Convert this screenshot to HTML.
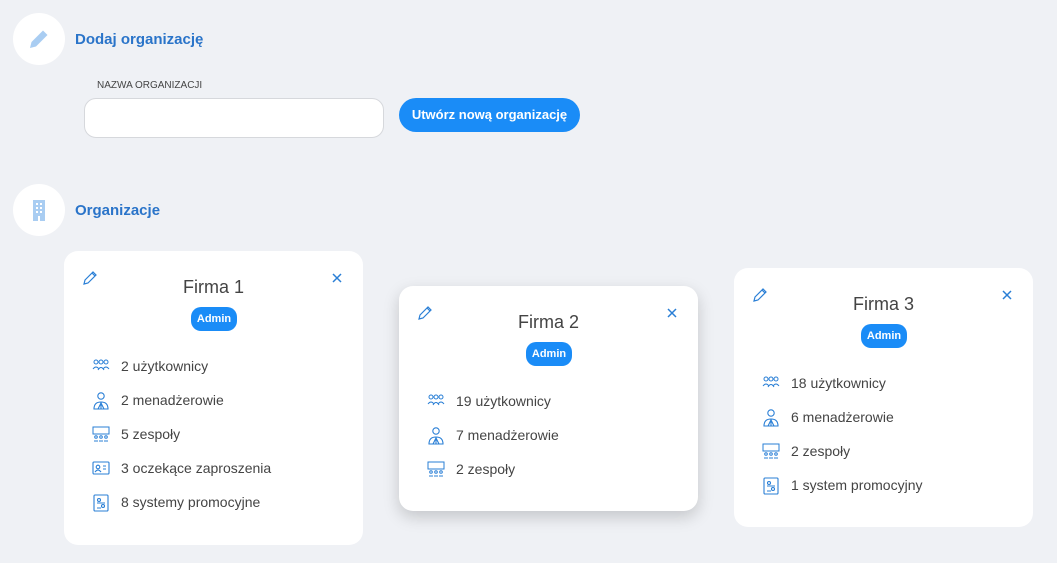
<!DOCTYPE html>
<html><head><meta charset="utf-8"><style>
body{margin:0;width:1057px;height:563px;background:#eff1f5;font-family:"Liberation Sans",sans-serif;position:relative;overflow:hidden}
.a{position:absolute}
.circ{width:52px;height:52px;border-radius:50%;background:#fff;left:13px}
.h{color:#2a74c9;font-size:15px;font-weight:bold;left:75px}
.card{background:#fff;border-radius:14px;width:299px}
.t{width:100%;text-align:center;top:26px;font-size:18px;color:#444}
.badge{left:127px;top:56px;width:46px;height:24px;border-radius:10px;background:#1a8cf7;color:#fff;font-size:11px;font-weight:bold;text-align:center;line-height:24px}
.it{left:28px;font-size:14px;color:#444;height:20px;line-height:20px}
.it svg{position:absolute;left:0;top:2px}
.it span{position:absolute;left:29px;white-space:nowrap}
</style></head><body>
<div class="a circ" style="top:13px"><svg class="a" style="left:14px;top:14px" width="24" height="24" viewBox="0 0 24 24"><path d="M3 21l1.5-6L16 3.5l4.5 4.5L9 19.5z" fill="#a9cdf2"/></svg></div>
<div class="a h" style="top:31px">Dodaj organizację</div>
<div class="a" style="left:97px;top:80px;font-size:10px;color:#444">NAZWA ORGANIZACJI</div>
<div class="a" style="left:84px;top:98px;width:298px;height:38px;background:#fff;border:1px solid #d6d8dc;border-radius:12px"></div>
<div class="a" style="left:399px;top:98px;width:181px;height:34px;background:#1a8cf7;border-radius:17px;color:#fff;font-weight:bold;font-size:13px;text-align:center;line-height:34px">Utwórz nową organizację</div>
<div class="a circ" style="top:184px"><svg class="a" style="left:18px;top:15px" width="16" height="22" viewBox="0 0 16 22"><rect x="2" y="1" width="12" height="21" fill="#a9cdf2"/><g fill="#fff"><rect x="5" y="4" width="2" height="2"/><rect x="9" y="4" width="2" height="2"/><rect x="5" y="8" width="2" height="2"/><rect x="9" y="8" width="2" height="2"/><rect x="5" y="12" width="2" height="2"/><rect x="9" y="12" width="2" height="2"/><rect x="7" y="17" width="2" height="5"/></g></svg></div>
<div class="a h" style="top:202px">Organizacje</div>

<div class="a card" style="left:64px;top:251px;height:294px">
<svg class="a" style="left:18px;top:19px" width="16" height="16" viewBox="0 0 16 16"><path d="M2 14l1-4 8-8 3 3-8 8zM10 3l3 3" fill="none" stroke="#2a7fd6" stroke-width="1.2"/></svg>
<svg class="a" style="left:268px;top:22px" width="10" height="10" viewBox="0 0 10 10"><path d="M1 1l8 8M9 1l-8 8" stroke="#2a7fd6" stroke-width="1.5"/></svg>
<div class="a t">Firma 1</div><div class="a badge">Admin</div>
<div class="a it" style="top:105px"><svg width="18" height="16"><g fill="none" stroke="#2a7fd6" stroke-width="1"><circle cx="4" cy="4" r="2"/><circle cx="9" cy="4" r="2"/><circle cx="14" cy="4" r="2"/><path d="M1 11q3-4 6 0M6 12q3-5 6 0M11 11q3-4 6 0"/></g></svg><span>2 użytkownicy</span></div>
<div class="a it" style="top:139px"><svg width="18" height="18"><g fill="none" stroke="#2a7fd6" stroke-width="1.1"><circle cx="9" cy="4" r="3.2"/><path d="M2 17q0-7 7-7 7 0 7 7zM9 10v7M6 17l3-6 3 6"/></g></svg><span>2 menadżerowie</span></div>
<div class="a it" style="top:173px"><svg width="18" height="16"><g fill="none" stroke="#2a7fd6" stroke-width="1"><rect x="1" y="1" width="16" height="7"/><circle cx="4" cy="11" r="1.3"/><circle cx="9" cy="11" r="1.3"/><circle cx="14" cy="11" r="1.3"/><path d="M2 15h4M7 15h4M12 15h4"/></g></svg><span>5 zespoły</span></div>
<div class="a it" style="top:207px"><svg width="18" height="16"><g fill="none" stroke="#2a7fd6" stroke-width="1.1"><rect x="1" y="2" width="16" height="12" rx="1"/><circle cx="6" cy="7" r="1.8"/><path d="M3 12q3-4 6 0M11 6h3M11 9h3"/></g></svg><span>3 oczekące zaproszenia</span></div>
<div class="a it" style="top:241px"><svg width="18" height="18"><g fill="none" stroke="#2a7fd6" stroke-width="1.1"><rect x="2" y="1" width="14" height="16" rx="1"/><circle cx="7" cy="6" r="1.5"/><circle cx="11" cy="12" r="1.5"/><path d="M5 9h8M5 14h4"/></g></svg><span>8 systemy promocyjne</span></div>
</div>

<div class="a card" style="left:399px;top:286px;height:225px;box-shadow:0 6px 16px rgba(0,0,0,0.18)">
<svg class="a" style="left:18px;top:19px" width="16" height="16" viewBox="0 0 16 16"><path d="M2 14l1-4 8-8 3 3-8 8zM10 3l3 3" fill="none" stroke="#2a7fd6" stroke-width="1.2"/></svg>
<svg class="a" style="left:268px;top:22px" width="10" height="10" viewBox="0 0 10 10"><path d="M1 1l8 8M9 1l-8 8" stroke="#2a7fd6" stroke-width="1.5"/></svg>
<div class="a t">Firma 2</div><div class="a badge">Admin</div>
<div class="a it" style="top:105px"><svg width="18" height="16"><g fill="none" stroke="#2a7fd6" stroke-width="1"><circle cx="4" cy="4" r="2"/><circle cx="9" cy="4" r="2"/><circle cx="14" cy="4" r="2"/><path d="M1 11q3-4 6 0M6 12q3-5 6 0M11 11q3-4 6 0"/></g></svg><span>19 użytkownicy</span></div>
<div class="a it" style="top:139px"><svg width="18" height="18"><g fill="none" stroke="#2a7fd6" stroke-width="1.1"><circle cx="9" cy="4" r="3.2"/><path d="M2 17q0-7 7-7 7 0 7 7zM9 10v7M6 17l3-6 3 6"/></g></svg><span>7 menadżerowie</span></div>
<div class="a it" style="top:173px"><svg width="18" height="16"><g fill="none" stroke="#2a7fd6" stroke-width="1"><rect x="1" y="1" width="16" height="7"/><circle cx="4" cy="11" r="1.3"/><circle cx="9" cy="11" r="1.3"/><circle cx="14" cy="11" r="1.3"/><path d="M2 15h4M7 15h4M12 15h4"/></g></svg><span>2 zespoły</span></div>
</div>

<div class="a card" style="left:734px;top:268px;height:259px">
<svg class="a" style="left:18px;top:19px" width="16" height="16" viewBox="0 0 16 16"><path d="M2 14l1-4 8-8 3 3-8 8zM10 3l3 3" fill="none" stroke="#2a7fd6" stroke-width="1.2"/></svg>
<svg class="a" style="left:268px;top:22px" width="10" height="10" viewBox="0 0 10 10"><path d="M1 1l8 8M9 1l-8 8" stroke="#2a7fd6" stroke-width="1.5"/></svg>
<div class="a t">Firma 3</div><div class="a badge">Admin</div>
<div class="a it" style="top:105px"><svg width="18" height="16"><g fill="none" stroke="#2a7fd6" stroke-width="1"><circle cx="4" cy="4" r="2"/><circle cx="9" cy="4" r="2"/><circle cx="14" cy="4" r="2"/><path d="M1 11q3-4 6 0M6 12q3-5 6 0M11 11q3-4 6 0"/></g></svg><span>18 użytkownicy</span></div>
<div class="a it" style="top:139px"><svg width="18" height="18"><g fill="none" stroke="#2a7fd6" stroke-width="1.1"><circle cx="9" cy="4" r="3.2"/><path d="M2 17q0-7 7-7 7 0 7 7zM9 10v7M6 17l3-6 3 6"/></g></svg><span>6 menadżerowie</span></div>
<div class="a it" style="top:173px"><svg width="18" height="16"><g fill="none" stroke="#2a7fd6" stroke-width="1"><rect x="1" y="1" width="16" height="7"/><circle cx="4" cy="11" r="1.3"/><circle cx="9" cy="11" r="1.3"/><circle cx="14" cy="11" r="1.3"/><path d="M2 15h4M7 15h4M12 15h4"/></g></svg><span>2 zespoły</span></div>
<div class="a it" style="top:207px"><svg width="18" height="18"><g fill="none" stroke="#2a7fd6" stroke-width="1.1"><rect x="2" y="1" width="14" height="16" rx="1"/><circle cx="7" cy="6" r="1.5"/><circle cx="11" cy="12" r="1.5"/><path d="M5 9h8M5 14h4"/></g></svg><span>1 system promocyjny</span></div>
</div>
</body></html>
